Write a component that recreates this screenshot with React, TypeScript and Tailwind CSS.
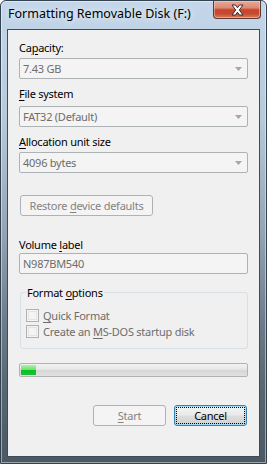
import React from 'react';

const U: React.FC<{ children: React.ReactNode }> = ({ children }) => (
  <span className="underline underline-offset-[2px] decoration-[1px]">{children}</span>
);

const Arrow = () => (
  <svg width="7" height="4" viewBox="0 0 7 4" className="shrink-0">
    <path d="M0 0 H7 L3.5 4 Z" fill="#a6a6a6" />
  </svg>
);

const Combo: React.FC<{ value: string; className?: string }> = ({ value, className }) => (
  <div
    className={`h-[21px] flex items-center justify-between pl-[3px] pr-[5px] border border-[#adb2b5] rounded-[2px] bg-[#f4f4f4] text-[#6d6d6d] ${className ?? ''}`}
  >
    <span>{value}</span>
    <Arrow />
  </div>
);

const CheckRow: React.FC<{ children: React.ReactNode; className?: string }> = ({ children, className }) => (
  <div className={`h-[16px] flex items-center gap-[4px] text-[#6d6d6d] ${className ?? ''}`}>
    <div className="w-[13px] h-[13px] border border-[#b1b1b1] bg-[#f4f4f4] p-[1px]">
      <div className="w-full h-full border border-[#e4e4e4]" />
    </div>
    <span>{children}</span>
  </div>
);

const CloseButton = () => (
  <div className="w-[48px] h-[18px] flex items-center justify-center rounded-b-[4px] border border-t-0 border-[#5a3a36] bg-[linear-gradient(180deg,#eaa897_0%,#dc8a76_40%,#c7462c_52%,#c54a30_75%,#de7a5c_100%)] shadow-[inset_0_0_0_1px_rgba(255,220,210,0.45)]">
    <svg width="13" height="12" viewBox="0 0 13 12">
      <path
        d="M1 1 H4.5 L6.5 3.8 L8.5 1 H12 L8.3 6 L12 11 H8.5 L6.5 8.2 L4.5 11 H1 L4.7 6 Z"
        fill="#ffffff"
        stroke="#3d2b2a"
        strokeWidth="1"
        strokeLinejoin="round"
      />
    </svg>
  </div>
);

const Button: React.FC<{ children: React.ReactNode; className?: string }> = ({ children, className }) => (
  <div
    className={`h-[21px] flex items-center justify-center border border-[#adb2b5] rounded-[3px] bg-[#f4f4f4] text-[#838383] ${className ?? ''}`}
  >
    {children}
  </div>
);

export default function App() {
  return (
    <div className="w-[267px] h-[464px] font-['Noto_Sans',sans-serif] text-[11px] leading-[15px] tracking-[-0.25px] text-black">
      <div className="h-full flex flex-col rounded-t-[6px] border border-[#34414e] bg-[linear-gradient(180deg,#c4d7ea_0%,#b7cadc_25%,#93a4b4_50%,#6b7b89_70%,#56656f_85%,#4c5965_100%)] shadow-[inset_0_0_0_1px_rgba(255,255,255,0.45)]">
        {/* Title bar */}
        <div className="h-[28px] flex items-start justify-between pl-[7px] pr-[5px]">
          <span className="mt-[5px] text-[12.5px] tracking-normal [text-shadow:0_0_6px_rgba(255,255,255,0.95)]">
            Formatting Removable Disk (F:)
          </span>
          <CloseButton />
        </div>

        {/* Client area */}
        <div className="mx-[6px] mb-[6px] flex-1 flex flex-col px-[11px] border border-[#3f4b57] bg-[#f0f0f0]">
          <div className="mt-[10px]">
            Ca<U>p</U>acity:
          </div>
          <Combo value="7.43 GB" className="mt-[3px]" />

          <div className="mt-[7px]">
            <U>F</U>ile system
          </div>
          <Combo value="FAT32 (Default)" className="mt-[5px]" />

          <div className="mt-[7px]">
            <U>A</U>llocation unit size
          </div>
          <Combo value="4096 bytes" className="mt-[3px]" />

          <Button className="mt-[22px] ml-[1px] w-[133px]">
            <span>
              Restore <U>d</U>evice defaults
            </span>
          </Button>

          <div className="mt-[21px]">
            Volume <U>l</U>abel
          </div>
          <div className="mt-[1px] h-[21px] flex items-center pl-[3px] border border-[#adb2b5] rounded-[2px] bg-[#f4f4f4] text-[#6d6d6d]">
            N987BM540
          </div>

          <fieldset className="mt-[11px] ml-[1px] pl-[5px] pb-[9px] border border-[#d5dfe5] rounded-[3px]">
            <legend className="px-[1px]">
              Format <U>o</U>ptions
            </legend>
            <CheckRow className="mt-[7px]">
              <U>Q</U>uick Format
            </CheckRow>
            <CheckRow>
              Create an <U>M</U>S-DOS startup disk
            </CheckRow>
          </fieldset>

          {/* Progress bar */}
          <div className="mt-[14px] h-[14px] flex p-[1px] border border-[#b2b2b2] rounded-[2px] bg-[linear-gradient(180deg,#f3f3f3_0%,#e6e6e6_45%,#d6d6d6_55%,#e2e2e2_100%)]">
            <div className="w-[15px] h-full bg-[linear-gradient(180deg,#a9f3a9_0%,#6fe36f_45%,#08c322_55%,#1bbf34_100%)]" />
          </div>

          {/* Buttons */}
          <div className="mt-[28px] mr-[1px] flex justify-end gap-[8px]">
            <Button className="w-[73px]">
              <span>
                <U>S</U>tart
              </span>
            </Button>
            <div className="w-[73px] h-[21px] p-[1px] border border-[#3c7fb1] rounded-[3px] bg-[linear-gradient(180deg,#f2f2f2_0%,#ebebeb_45%,#dddddd_55%,#cfcfcf_100%)] shadow-[inset_0_0_0_1px_#9fdcf8]">
              <div className="h-full flex items-center justify-center border border-dotted border-black">
                Cancel
              </div>
            </div>
          </div>
        </div>
      </div>
    </div>
  );
}
